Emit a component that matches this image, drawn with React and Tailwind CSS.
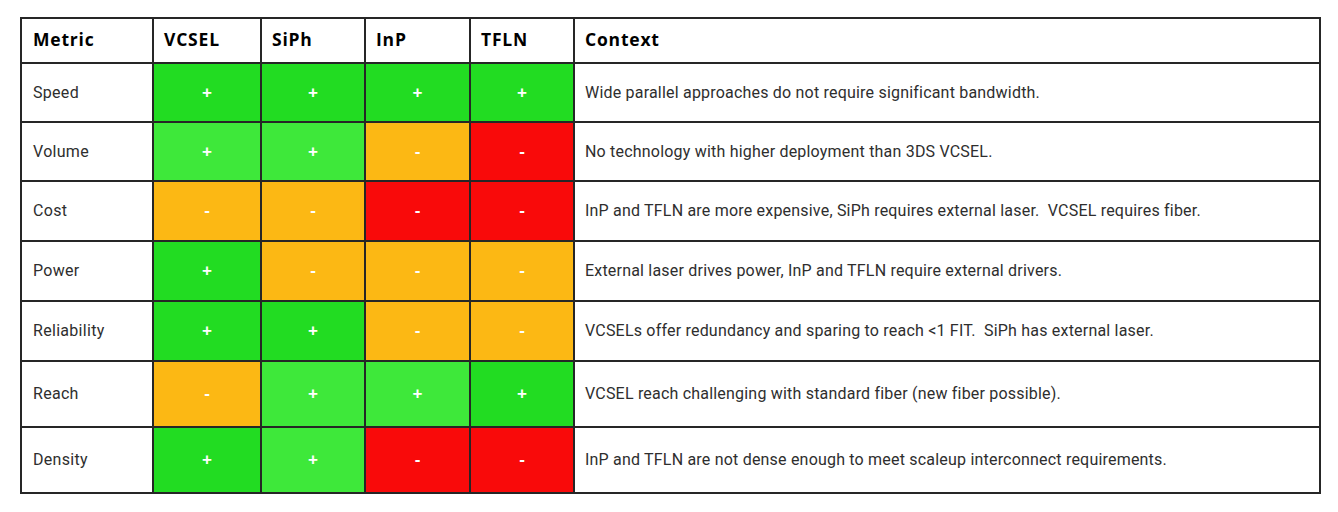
import React from 'react';

const G = 'bg-[#22dc22]';
const GL = 'bg-[#3ee83a]';
const O = 'bg-[#fcb814]';
const R = 'bg-[#f90a0a]';

const rows = [
  { name: 'Speed', h: 'h-[57px]', cells: [[G, '+'], [G, '+'], [G, '+'], [G, '+']], text: 'Wide parallel approaches do not require significant bandwidth.' },
  { name: 'Volume', h: 'h-[57px]', cells: [[GL, '+'], [GL, '+'], [O, '-'], [R, '-']], text: 'No technology with higher deployment than 3DS VCSEL.' },
  { name: 'Cost', h: 'h-[58px]', cells: [[O, '-'], [O, '-'], [R, '-'], [R, '-']], text: 'InP and TFLN are more expensive, SiPh requires external laser.\u00a0 VCSEL requires fiber.' },
  { name: 'Power', h: 'h-[58px]', cells: [[G, '+'], [O, '-'], [O, '-'], [O, '-']], text: 'External laser drives power, InP and TFLN require external drivers.' },
  { name: 'Reliability', h: 'h-[58px]', cells: [[G, '+'], [G, '+'], [O, '-'], [O, '-']], text: 'VCSELs offer redundancy and sparing to reach <1 FIT.\u00a0 SiPh has external laser.' },
  { name: 'Reach', h: 'h-[64px]', cells: [[O, '-'], [GL, '+'], [GL, '+'], [G, '+']], text: 'VCSEL reach challenging with standard fiber (new fiber possible).' },
  { name: 'Density', h: 'h-[64px]', cells: [[G, '+'], [GL, '+'], [R, '-'], [R, '-']], text: 'InP and TFLN are not dense enough to meet scaleup interconnect requirements.' },
];

const heads = ['Metric', 'VCSEL', 'SiPh', 'InP', 'TFLN', 'Context'];

export default function App() {
  return (
    <div className="w-[1338px] h-[512px] bg-white font-['Roboto',sans-serif] text-[#1c1c1c] overflow-hidden">
      <div className="ml-[20px] pt-[17px]">
        <div className="w-[1301px] bg-[#262626] p-[2px] grid grid-cols-[130px_106px_102px_103px_102px_744px] gap-[2px]">
          {heads.map((h, i) => (
            <div
              key={h}
              className={`h-[43px] bg-white flex items-center pb-[3px] font-bold text-[17.5px] tracking-[0.8px] font-['Open_Sans',sans-serif] text-black ${i === 0 ? 'pl-[11px]' : 'pl-[10px]'}`}
            >
              {h}
            </div>
          ))}
          {rows.map(r => (
            <React.Fragment key={r.name}>
              <div className={`${r.h} bg-white flex items-center pl-[11px] text-[16px] tracking-[0.3px] text-[#2e2e2e]`}>{r.name}</div>
              {r.cells.map(([bg, sign], j) => (
                <div key={j} className={`${r.h} ${bg} flex items-center justify-center text-white font-bold text-[17px] font-['Liberation_Sans',sans-serif]`}>
                  {sign}
                </div>
              ))}
              <div className={`${r.h} bg-white flex items-center pl-[10px] text-[16px] tracking-[0.2px] text-[#2e2e2e]`}>{r.text}</div>
            </React.Fragment>
          ))}
        </div>
      </div>
    </div>
  );
}
